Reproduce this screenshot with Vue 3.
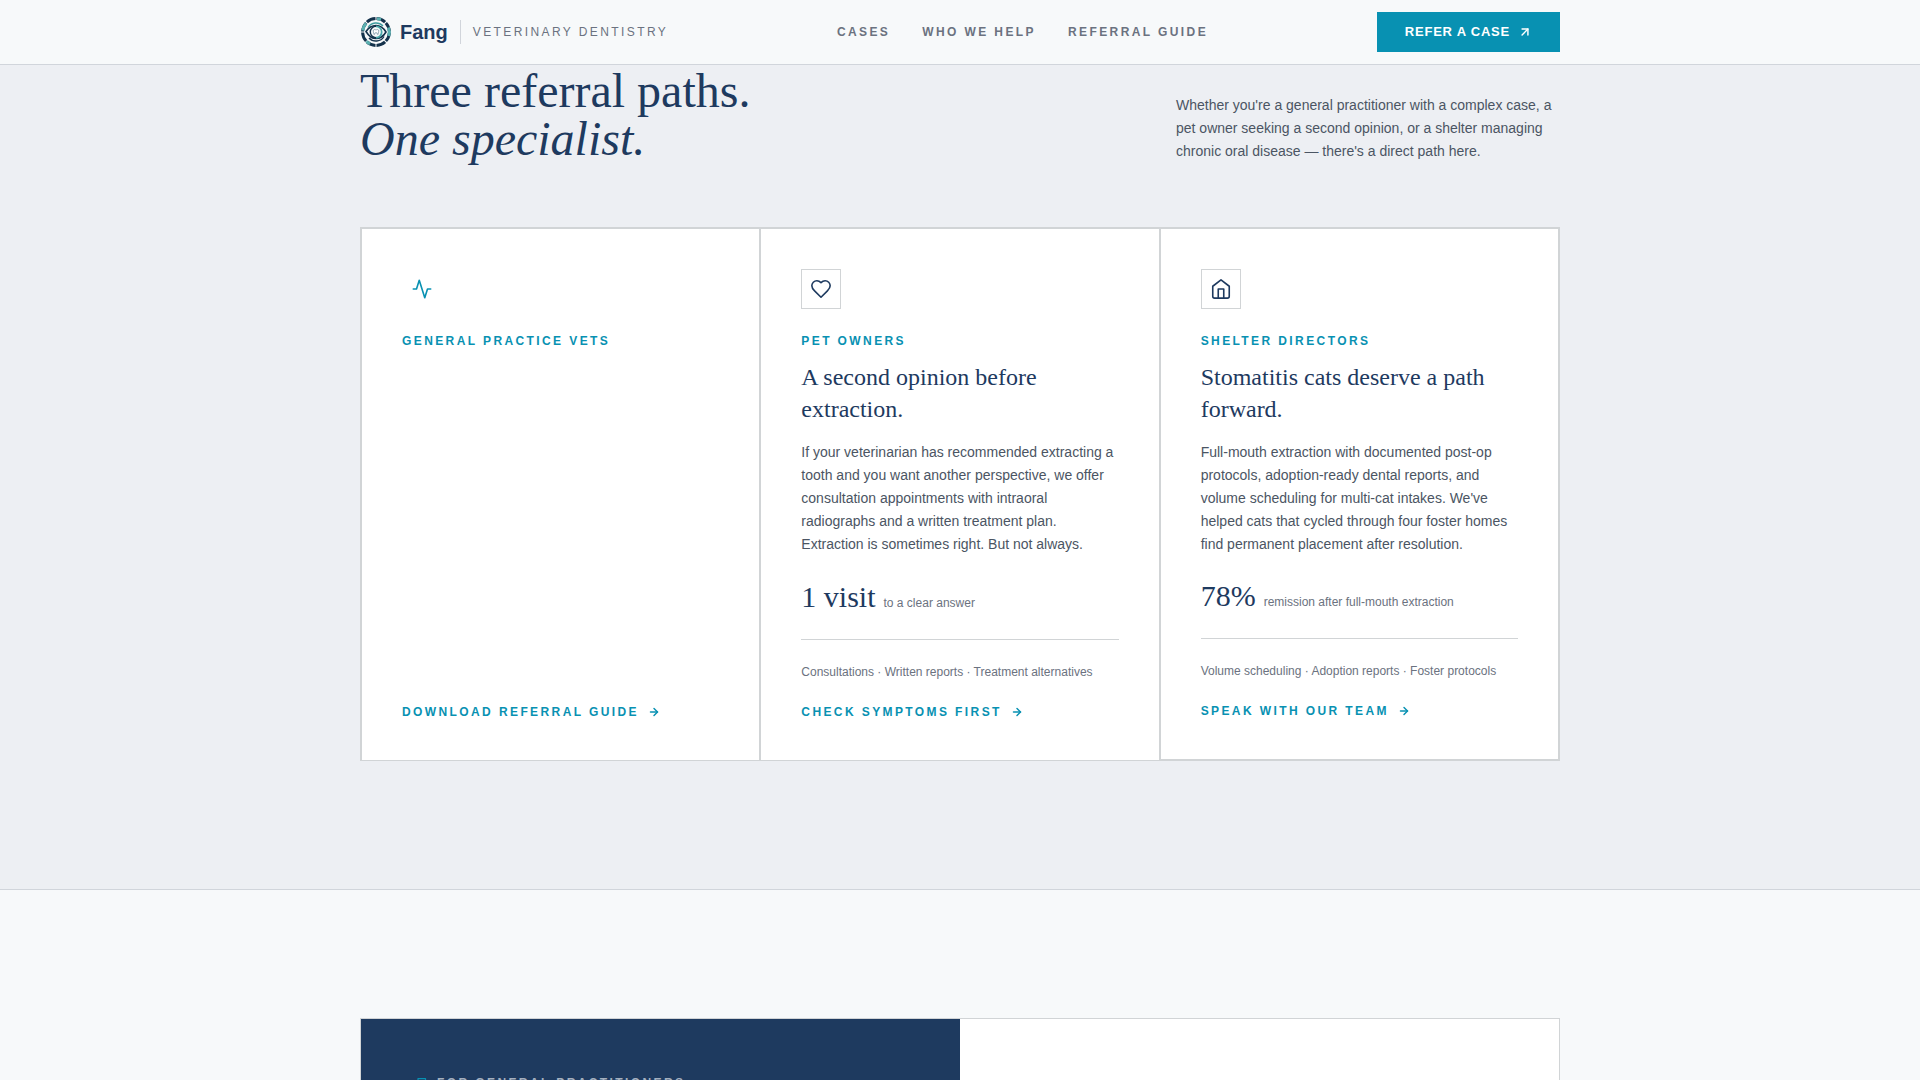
<script setup>
const navLinks = ['Cases', 'Who we help', 'Referral guide']

const paths = [
  {
    icon: 'activity',
    label: 'General practice vets',
    link: 'Download referral guide',
    accent: true
  },
  {
    icon: 'heart',
    label: 'Pet owners',
    title: 'A second opinion before extraction.',
    body: 'If your veterinarian has recommended extracting a tooth and you want another perspective, we offer consultation appointments with intraoral radiographs and a written treatment plan. Extraction is sometimes right. But not always.',
    stat: '1 visit',
    statNote: 'to a clear answer',
    services: 'Consultations · Written reports · Treatment alternatives',
    link: 'Check symptoms first'
  },
  {
    icon: 'house',
    label: 'Shelter directors',
    title: 'Stomatitis cats deserve a path forward.',
    body: "Full-mouth extraction with documented post-op protocols, adoption-ready dental reports, and volume scheduling for multi-cat intakes. We've helped cats that cycled through four foster homes find permanent placement after resolution.",
    stat: '78%',
    statNote: 'remission after full-mouth extraction',
    services: 'Volume scheduling · Adoption reports · Foster protocols',
    link: 'Speak with our team'
  }
]
</script>

<template>
  <div class="page">
    <header class="site-header">
      <div class="container header-row">
        <a class="brand" href="#">
          <svg class="logo" viewBox="0 0 32 32" fill="none" aria-hidden="true">
            <circle cx="16" cy="16" r="13.4" stroke="#14324b" stroke-width="3" pathLength="80" stroke-dasharray="9 1" stroke-dashoffset="-.5" />
            <path d="M2.800 14.500A13.400 13.400 0 0 1 6 7.200" stroke="#5ab0b0" stroke-width="3" />
            <path d="M17 2.700A13.400 13.400 0 0 1 21 3.600" stroke="#5ab0b0" stroke-width="3" />
            <path d="M28.500 11.500A13.400 13.400 0 0 1 28.800 20" stroke="#5ab0b0" stroke-width="3" />
            <path d="M10 28A13.400 13.400 0 0 1 6.500 25.300" stroke="#5ab0b0" stroke-width="3" />
            <path d="M8 11.500A9.400 9.400 0 0 1 23 10" stroke="#3f9c9f" stroke-width="1.400" />
            <path d="M24 20.500A9.400 9.400 0 0 1 9 22" stroke="#14324b" stroke-width="1.400" />
            <path d="M6 15.500C9 11 12.500 9.500 16 9.500s7 1.500 10 6.500c-3 5-6.500 6.500-10 6.500S9 20.500 6 15.500Z" stroke="#14324b" stroke-width="1.600" />
            <path d="M16 10.300a5.700 5.700 0 0 0 0 11.400" stroke="#14324b" stroke-width="1.400" />
            <path d="M16 10.300a5.700 5.700 0 0 1 0 11.400" stroke="#4aa7a9" stroke-width="1.800" />
            <path d="M13.500 14c1-1 1.800-.3 2.500 0 .7-.3 1.500-1 2.500 0 .7 1.200-.2 2-.5 4.500-.8.300-.7-2-2-2s-1.200 2.300-2 2c-.3-2.500-1.200-3.300-.5-4.500Z" fill="#fff" stroke="#55758a" stroke-width=".6" />
          </svg>
          <span class="brand-name">Fang</span>
          <span class="brand-tag">Veterinary dentistry</span>
        </a>
        <nav class="nav">
          <a v-for="item in navLinks" :key="item" href="#">{{ item }}</a>
        </nav>
        <button class="cta" type="button">
          Refer a case
          <svg class="icon-sm" viewBox="0 0 24 24" aria-hidden="true"><path d="M7 7h10v10" /><path d="M7 17 17 7" /></svg>
        </button>
      </div>
    </header>

    <section class="referral">
      <div class="container">
        <div class="intro">
          <h2>Three referral paths.<br /><em>One specialist.</em></h2>
          <p>Whether you're a general practitioner with a complex case, a pet owner seeking a second opinion, or a shelter managing chronic oral disease — there's a direct path here.</p>
        </div>

        <div class="cards">
          <article v-for="path in paths" :key="path.label" class="card">
            <div class="icon-box" :class="{ accent: path.accent }">
              <svg class="icon-md" viewBox="0 0 24 24" aria-hidden="true">
                <path v-if="path.icon === 'activity'" d="M21.500 12H18l-3 9.500L9 2.500 6 12H2.500" />
                <path v-else-if="path.icon === 'heart'" d="M19 14c1.490-1.460 3-3.210 3-5.500A5.500 5.500 0 0 0 16.500 3c-1.760 0-3 .5-4.500 2-1.500-1.500-2.740-2-4.500-2A5.500 5.500 0 0 0 2 8.500c0 2.300 1.500 4.050 3 5.500l7 7Z" />
                <template v-else>
                  <path d="m3 9 9-7 9 7v11a2 2 0 0 1-2 2H5a2 2 0 0 1-2-2z" />
                  <path d="M9 22V12h6v10" />
                </template>
              </svg>
            </div>
            <p class="label">{{ path.label }}</p>
            <template v-if="path.title">
              <h3>{{ path.title }}</h3>
              <p class="body">{{ path.body }}</p>
              <p class="stat"><strong>{{ path.stat }}</strong><span>{{ path.statNote }}</span></p>
              <p class="services">{{ path.services }}</p>
            </template>
            <a class="card-link" href="#">
              {{ path.link }}
              <svg class="icon-sm" viewBox="0 0 24 24" aria-hidden="true"><path d="M6 12h12" /><path d="m12 6 6 6-6 6" /></svg>
            </a>
          </article>
        </div>
      </div>
    </section>

    <section class="practitioners">
      <div class="container">
        <div class="panel">
          <div class="panel-lead">
            <p class="eyebrow">
              <svg class="icon-xs" viewBox="0 0 24 24" aria-hidden="true"><path d="M2 3h15v18H2z" /></svg>
              For general practitioners
            </p>
          </div>
          <div class="panel-side"></div>
        </div>
      </div>
    </section>
  </div>
</template>

<style>
body {
  margin: 0;
}
</style>

<style scoped>
.page {
  display: flex;
  flex-direction: column;
  height: 100vh;
  overflow: hidden;
  background: #f7f9fa;
  color: #1e3a5f;
  font-family: "Liberation Sans", Arial, sans-serif;
}

.page * {
  box-sizing: border-box;
}

h2,
h3,
p {
  margin: 0;
  font-weight: 400;
}

a {
  color: inherit;
  text-decoration: none;
}

svg {
  flex: none;
}

.container {
  width: 100%;
  max-width: 1200px;
  margin: 0 auto;
}

.site-header {
  flex: none;
  border-bottom: 1px solid #d1d5db;
}

.header-row {
  display: flex;
  align-items: center;
  justify-content: space-between;
  height: 64px;
}

.brand {
  display: flex;
  align-items: center;
}

.logo {
  width: 32px;
  height: 32px;
}

.brand-name {
  margin-left: 8px;
  font-size: 20px;
  font-weight: 700;
  line-height: 28px;
}

.brand-tag {
  margin-left: 12px;
  padding-left: 12px;
  border-left: 1px solid #d1d5db;
  color: #6b7280;
  font-size: 12px;
  line-height: 24px;
  letter-spacing: 0.2em;
  text-transform: uppercase;
}

.nav {
  display: flex;
  gap: 32px;
  color: #6b7280;
  font-size: 12px;
  font-weight: 700;
  line-height: 16px;
  letter-spacing: 0.2em;
  text-transform: uppercase;
}

.cta {
  display: flex;
  align-items: center;
  gap: 8px;
  height: 40px;
  padding: 0 28px;
  border: 0;
  background: #0891b2;
  color: #fff;
  font-family: inherit;
  font-size: 13px;
  font-weight: 700;
  line-height: 20px;
  letter-spacing: 0.06em;
  text-transform: uppercase;
}

.icon-sm,
.icon-md,
.icon-xs {
  fill: none;
  stroke: currentColor;
  stroke-width: 2.5;
  stroke-linecap: round;
  stroke-linejoin: round;
}

.icon-sm {
  width: 14px;
  height: 14px;
}

.icon-md {
  width: 22px;
  height: 22px;
  stroke-width: 1.75;
}

.icon-xs {
  width: 12px;
  height: 12px;
  color: #0891b2;
}

.referral {
  flex: none;
  padding: 2px 0 128px;
  border-bottom: 1px solid #d1d5db;
  background: #edeff3;
}

.intro {
  display: flex;
  align-items: flex-end;
  justify-content: space-between;
  margin-bottom: 64px;
}

.intro h2 {
  font-family: "Liberation Serif", "Times New Roman", serif;
  font-size: 48px;
  line-height: 48px;
}

.intro p {
  width: 384px;
  color: #4b5563;
  font-size: 14px;
  line-height: 23px;
}

.cards {
  display: grid;
  grid-template-columns: repeat(3, 1fr);
  border: 1px solid #d1d4d6;
}

.card {
  display: flex;
  flex-direction: column;
  align-items: flex-start;
  padding: 40px;
  border: 1px solid #d1d4d6;
  border-bottom-width: 0;
  background: #fff;
}

.card:last-child {
  border-bottom-width: 1px;
}

.icon-box {
  display: flex;
  align-items: center;
  justify-content: center;
  width: 40px;
  height: 40px;
  margin-bottom: 24px;
  border: 1px solid #d1d4d6;
}

.icon-box.accent {
  border-color: #fff;
  color: #0891b2;
}

.label,
.card-link {
  color: #0891b2;
  font-size: 12px;
  font-weight: 700;
  line-height: 16px;
  letter-spacing: 0.2em;
  text-transform: uppercase;
}

.card h3 {
  margin: 12px 0 16px;
  font-family: "Liberation Serif", "Times New Roman", serif;
  font-size: 24px;
  line-height: 32px;
}

.body {
  margin-bottom: 22px;
  color: #4b5563;
  font-size: 14px;
  line-height: 23px;
}

.stat {
  display: flex;
  align-items: baseline;
  gap: 8px;
  width: 100%;
  margin-top: auto;
  padding-bottom: 24px;
  border-bottom: 1px solid #d1d4d6;
  line-height: 36px;
}

.stat strong {
  font-family: "Liberation Serif", "Times New Roman", serif;
  font-size: 30px;
  font-weight: 400;
}

.stat span {
  color: #6b7280;
  font-size: 12px;
  line-height: 16px;
}

.services {
  margin: 24px 0;
  color: #6b7280;
  font-size: 12px;
  line-height: 16px;
}

.card-link {
  display: flex;
  align-items: center;
  gap: 8px;
}

.label + .card-link {
  margin-top: auto;
}

.practitioners {
  flex: none;
  padding: 128px 0;
}

.panel {
  display: grid;
  grid-template-columns: 1fr 1fr;
  border: 1px solid #d1d4d6;
}

.panel-lead {
  padding: 56px;
  background: #1e3a5f;
}

.panel-side {
  background: #fff;
}

.eyebrow {
  display: flex;
  align-items: center;
  gap: 8px;
  color: #a5b0bf;
  font-size: 12px;
  font-weight: 700;
  line-height: 16px;
  letter-spacing: 0.2em;
  text-transform: uppercase;
}
</style>
